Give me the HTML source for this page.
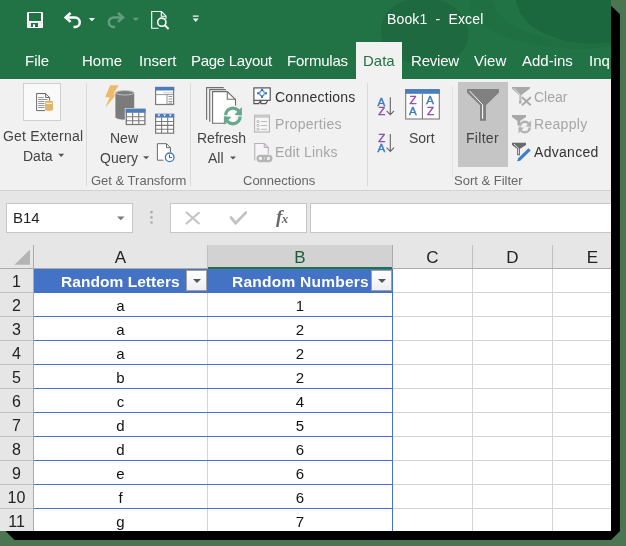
<!DOCTYPE html>
<html><head><meta charset="utf-8">
<style>
*{margin:0;padding:0;box-sizing:border-box}
html,body{width:626px;height:546px;overflow:hidden;background:#4c7552;font-family:"Liberation Sans",sans-serif}
.abs{position:absolute}
#shadow{position:absolute;left:8px;top:6px;width:612px;height:534px;background:#000;border-radius:9px}
#win{position:absolute;left:0;top:0;width:611px;height:531px;background:#fff;overflow:hidden;will-change:transform}
#title{position:absolute;left:0;top:0;width:611px;height:79px;background:#217346;overflow:hidden}
.t{position:absolute;white-space:nowrap;line-height:1}
.tab{color:#fff;font-size:15px;top:53px}
#ribbon{position:absolute;left:0;top:79px;width:611px;height:112px;background:#f1f1f1;border-bottom:1px solid #d2d2d2}
.rt{color:#444;font-size:14px}
.gl{color:#666;font-size:13px}
.sep{position:absolute;width:1px;background:#dadada}
#fbar{position:absolute;left:0;top:191px;width:611px;height:54px;background:#e6e6e6}
#grid{position:absolute;left:0;top:245px;width:611px;height:286px;background:#fff}
.hl{position:absolute;height:1px}
.vl{position:absolute;width:1px}
.rh{position:absolute;left:0;width:33px;text-align:center;font-size:16px;color:#222;line-height:1}
.ch{position:absolute;top:4px;text-align:center;font-size:17px;color:#222;line-height:1}
.cell{position:absolute;text-align:center;font-size:15px;color:#111;line-height:1}
svg{position:absolute;left:0;top:0}
</style></head><body>
<svg width="626" height="546" style="position:absolute;left:0;top:0"><path d="M600 5.8 H611 L620 14.3 V531 L611 540 H14.5 L5.5 531 V520 H600 Z" fill="#000"/></svg>
<div id="win">
  <div id="title">
    <svg width="611" height="78" viewBox="0 0 611 78">
      <g fill="#1a5e39">
        <path d="M381 33 C380 12 398 -2 424 -2 C450 -2 468 14 468 34 C468 52 455 64 426 64 C400 64 382 52 381 33 Z" opacity="0.42"/>
        <path d="M516 0 C519 24 545 39 580 43 C595 44 605 43 611 42 V0 Z" opacity="0.55"/>
        <path d="M470 10 C485 32 515 45 560 48 C588 50 603 48 611 46 V42 C590 44 548 41 522 30 C505 22 495 12 492 0 H470 Z" opacity="0.2"/>
      </g>
    </svg>
    <div class="t" style="left:387px;top:12px;color:#fff;font-size:14px;letter-spacing:0.15px">Book1&nbsp; -&nbsp; Excel</div>
    <div class="t tab" style="left:25px">File</div>
    <div class="t tab" style="left:82px">Home</div>
    <div class="t tab" style="left:139px">Insert</div>
    <div class="t tab" style="left:191px;letter-spacing:-0.3px">Page Layout</div>
    <div class="t tab" style="left:287px;letter-spacing:-0.2px">Formulas</div>
    <div class="abs" style="left:356px;top:42px;width:46px;height:37px;background:#f1f1f1"></div>
    <div class="t tab" style="left:363px;color:#217346">Data</div>
    <div class="t tab" style="left:411px;letter-spacing:-0.2px">Review</div>
    <div class="t tab" style="left:474px">View</div>
    <div class="t tab" style="left:522px">Add-ins</div>
    <div class="t tab" style="left:589px">Inq</div>
  </div>
  <div id="ribbon">
    <div class="sep" style="left:86px;top:4px;height:103px"></div>
    <div class="sep" style="left:190px;top:4px;height:103px"></div>
    <div class="sep" style="left:367px;top:4px;height:103px"></div>
    <div class="sep" style="left:452px;top:7px;height:92px;background:#e4e4e4"></div>
    <div class="abs" style="left:23px;top:4px;width:38px;height:38px;border:1px solid #cfcfcf;background:#fafafa"></div>
    <div class="abs" style="left:458px;top:3px;width:50px;height:85px;background:#c5c5c5"></div>
    <div class="t rt" style="left:3px;top:50px;letter-spacing:0.2px">Get External</div>
    <div class="t rt" style="left:23px;top:70px">Data</div>
    <div class="t rt" style="left:110px;top:52px">New</div>
    <div class="t rt" style="left:100px;top:72px">Query</div>
    <div class="t gl" style="left:91px;top:95px">Get &amp; Transform</div>
    <div class="t rt" style="left:197px;top:52px">Refresh</div>
    <div class="t rt" style="left:208px;top:72px">All</div>
    <div class="t rt" style="left:275px;top:11px;color:#333;letter-spacing:0.25px">Connections</div>
    <div class="t rt" style="left:275px;top:38px;color:#a6a6a6;letter-spacing:0.3px">Properties</div>
    <div class="t rt" style="left:275px;top:66px;color:#a6a6a6;letter-spacing:0.2px">Edit Links</div>
    <div class="t gl" style="left:243px;top:95px">Connections</div>
    <div class="t rt" style="left:409px;top:52px">Sort</div>
    <div class="t rt" style="left:466px;top:52px;letter-spacing:0.3px">Filter</div>
    <div class="t rt" style="left:534px;top:11px;color:#a6a6a6">Clear</div>
    <div class="t rt" style="left:534px;top:38px;color:#a6a6a6;letter-spacing:0.3px">Reapply</div>
    <div class="t rt" style="left:534px;top:66px;color:#333;letter-spacing:0.3px">Advanced</div>
    <div class="t gl" style="left:454px;top:95px">Sort &amp; Filter</div>
  </div>
  <div id="fbar">
    <div class="abs" style="left:6px;top:12px;width:127px;height:30px;border:1px solid #c6c6c6;background:#fff"></div>
    <div class="t" style="left:13px;top:19px;font-size:15px;color:#222">B14</div>
    <div class="abs" style="left:170px;top:12px;width:137px;height:30px;border:1px solid #c6c6c6;background:#fff"></div>
    <div class="abs" style="left:310px;top:12px;width:310px;height:30px;border:1px solid #c6c6c6;background:#fff"></div>
  </div>
  <div id="grid">
    <div class="abs" style="left:0;top:0;width:611px;height:23px;background:#e6e6e6"></div>
    <div class="abs" style="left:208px;top:0;width:184px;height:22px;background:#d2d2d2"></div>
    <div class="abs" style="left:0;top:24px;width:33px;height:262px;background:#e6e6e6"></div>
    <div class="hl" style="left:0;top:23px;width:611px;background:#ababab"></div>
    <div class="hl" style="left:208px;top:22px;width:184px;height:2px;background:#217346"></div>
    <div class="vl" style="left:33px;top:0;height:286px;background:#ababab"></div>
    <div class="vl" style="left:207px;top:0;height:23px;background:#c0c0c0"></div>
    <div class="vl" style="left:392px;top:0;height:23px;background:#ababab"></div>
    <div class="vl" style="left:472px;top:0;height:23px;background:#c0c0c0"></div>
    <div class="vl" style="left:552px;top:0;height:23px;background:#c0c0c0"></div>
    <div class="ch" style="left:34px;width:173px">A</div>
    <div class="ch" style="left:208px;width:184px;color:#1d5c37">B</div>
    <div class="ch" style="left:393px;width:79px">C</div>
    <div class="ch" style="left:473px;width:79px">D</div>
    <div class="ch" style="left:553px;width:79px">E</div>
    <div class="rh" style="top:29px">1</div>
    <div class="hl" style="left:0;top:47px;width:33px;background:#c0c0c0"></div>
    <div class="rh" style="top:53px">2</div>
    <div class="hl" style="left:0;top:71px;width:33px;background:#c0c0c0"></div>
    <div class="hl" style="left:392px;top:71px;width:219px;background:#d4d4d4"></div>
    <div class="rh" style="top:77px">3</div>
    <div class="hl" style="left:0;top:95px;width:33px;background:#c0c0c0"></div>
    <div class="hl" style="left:392px;top:95px;width:219px;background:#d4d4d4"></div>
    <div class="rh" style="top:101px">4</div>
    <div class="hl" style="left:0;top:119px;width:33px;background:#c0c0c0"></div>
    <div class="hl" style="left:392px;top:119px;width:219px;background:#d4d4d4"></div>
    <div class="rh" style="top:125px">5</div>
    <div class="hl" style="left:0;top:143px;width:33px;background:#c0c0c0"></div>
    <div class="hl" style="left:392px;top:143px;width:219px;background:#d4d4d4"></div>
    <div class="rh" style="top:149px">6</div>
    <div class="hl" style="left:0;top:167px;width:33px;background:#c0c0c0"></div>
    <div class="hl" style="left:392px;top:167px;width:219px;background:#d4d4d4"></div>
    <div class="rh" style="top:173px">7</div>
    <div class="hl" style="left:0;top:191px;width:33px;background:#c0c0c0"></div>
    <div class="hl" style="left:392px;top:191px;width:219px;background:#d4d4d4"></div>
    <div class="rh" style="top:197px">8</div>
    <div class="hl" style="left:0;top:215px;width:33px;background:#c0c0c0"></div>
    <div class="hl" style="left:392px;top:215px;width:219px;background:#d4d4d4"></div>
    <div class="rh" style="top:221px">9</div>
    <div class="hl" style="left:0;top:239px;width:33px;background:#c0c0c0"></div>
    <div class="hl" style="left:392px;top:239px;width:219px;background:#d4d4d4"></div>
    <div class="rh" style="top:245px">10</div>
    <div class="hl" style="left:0;top:263px;width:33px;background:#c0c0c0"></div>
    <div class="hl" style="left:392px;top:263px;width:219px;background:#d4d4d4"></div>
    <div class="rh" style="top:269px">11</div>
    <div class="hl" style="left:0;top:287px;width:33px;background:#c0c0c0"></div>
    <div class="hl" style="left:392px;top:287px;width:219px;background:#d4d4d4"></div>
    <div class="vl" style="left:207px;top:47px;height:239px;background:#d4d4d4"></div>
    <div class="vl" style="left:472px;top:24px;height:262px;background:#d4d4d4"></div>
    <div class="vl" style="left:552px;top:24px;height:262px;background:#d4d4d4"></div>
    <div class="hl" style="left:392px;top:47px;width:219px;background:#d4d4d4"></div>
    <div class="abs" style="left:34px;top:24px;width:359px;height:24px;background:#4472c4"></div>
    <div class="hl" style="left:34px;top:71px;width:359px;background:#4472c4"></div>
    <div class="hl" style="left:34px;top:95px;width:359px;background:#4472c4"></div>
    <div class="hl" style="left:34px;top:119px;width:359px;background:#4472c4"></div>
    <div class="hl" style="left:34px;top:143px;width:359px;background:#4472c4"></div>
    <div class="hl" style="left:34px;top:167px;width:359px;background:#4472c4"></div>
    <div class="hl" style="left:34px;top:191px;width:359px;background:#4472c4"></div>
    <div class="hl" style="left:34px;top:215px;width:359px;background:#4472c4"></div>
    <div class="hl" style="left:34px;top:239px;width:359px;background:#4472c4"></div>
    <div class="hl" style="left:34px;top:263px;width:359px;background:#4472c4"></div>
    <div class="hl" style="left:34px;top:287px;width:359px;background:#4472c4"></div>
    <div class="vl" style="left:392px;top:24px;height:262px;background:#4472c4"></div>
    <div class="t" style="left:61px;top:29px;font-size:15.5px;font-weight:bold;color:#fff;letter-spacing:0.05px">Random Letters</div>
    <div class="t" style="left:232px;top:29px;font-size:15.5px;font-weight:bold;color:#fff;letter-spacing:0.25px">Random Numbers</div>
    <div class="abs" style="left:186px;top:25px;width:21px;height:21px;border:1px solid #a0a0a0;background:linear-gradient(#fff,#eceef2)"></div>
    <div class="abs" style="left:193px;top:34px;width:0;height:0;border-left:4px solid transparent;border-right:4px solid transparent;border-top:4px solid #555"></div>
    <div class="abs" style="left:371px;top:25px;width:21px;height:21px;border:1px solid #a0a0a0;background:linear-gradient(#fff,#eceef2)"></div>
    <div class="abs" style="left:378px;top:34px;width:0;height:0;border-left:4px solid transparent;border-right:4px solid transparent;border-top:4px solid #555"></div>
    <div class="cell" style="left:34px;width:173px;top:53px">a</div>
    <div class="cell" style="left:208px;width:184px;top:53px">1</div>
    <div class="cell" style="left:34px;width:173px;top:77px">a</div>
    <div class="cell" style="left:208px;width:184px;top:77px">2</div>
    <div class="cell" style="left:34px;width:173px;top:101px">a</div>
    <div class="cell" style="left:208px;width:184px;top:101px">2</div>
    <div class="cell" style="left:34px;width:173px;top:125px">b</div>
    <div class="cell" style="left:208px;width:184px;top:125px">2</div>
    <div class="cell" style="left:34px;width:173px;top:149px">c</div>
    <div class="cell" style="left:208px;width:184px;top:149px">4</div>
    <div class="cell" style="left:34px;width:173px;top:173px">d</div>
    <div class="cell" style="left:208px;width:184px;top:173px">5</div>
    <div class="cell" style="left:34px;width:173px;top:197px">d</div>
    <div class="cell" style="left:208px;width:184px;top:197px">6</div>
    <div class="cell" style="left:34px;width:173px;top:221px">e</div>
    <div class="cell" style="left:208px;width:184px;top:221px">6</div>
    <div class="cell" style="left:34px;width:173px;top:245px">f</div>
    <div class="cell" style="left:208px;width:184px;top:245px">6</div>
    <div class="cell" style="left:34px;width:173px;top:269px">g</div>
    <div class="cell" style="left:208px;width:184px;top:269px">7</div>
  </div>
<svg id="ov" width="611" height="531" viewBox="0 0 611 531" style="position:absolute;left:0;top:0;pointer-events:none">
<!-- save -->
<rect x="27" y="12" width="16" height="16" rx="1" fill="#fff"/>
<rect x="28" y="22" width="14" height="5" fill="#eeeeee"/>
<rect x="29" y="13" width="12" height="8" fill="#217346"/>
<rect x="31" y="23" width="7" height="4" fill="#217346"/>
<rect x="33" y="24.3" width="2" height="2.7" fill="#fff"/>
<!-- undo -->
<path d="M70.6 13 L65.6 17.4 L70.6 21.9" stroke="#fff" stroke-width="2.5" fill="none"/>
<path d="M65.5 17.4 H75 A4.75 4.75 0 0 1 75 26.9 H73.5" stroke="#fff" stroke-width="2.5" fill="none"/>
<path d="M88.8 18 H95 L91.9 21.2 Z" fill="#fff"/>
<!-- redo -->
<g transform="translate(188.6,0) scale(-1,1)" opacity="0.3">
<path d="M70.6 13 L65.6 17.4 L70.6 21.9" stroke="#fff" stroke-width="2.5" fill="none"/>
<path d="M65.5 17.4 H75 A4.75 4.75 0 0 1 75 26.9 H73.5" stroke="#fff" stroke-width="2.5" fill="none"/>
</g>
<path d="M132.6 17.8 H139 L135.8 21 Z" fill="#fff" opacity="0.3"/>
<!-- print preview -->
<path d="M158.5 28.3 H151.7 V11.5 H161.5 L166 16 V19" stroke="#fff" stroke-width="1.1" fill="none"/>
<path d="M161.3 11.5 V16.2 H166" stroke="#fff" stroke-width="1.1" fill="none"/>
<circle cx="161.8" cy="22.2" r="4.1" stroke="#fff" stroke-width="1.6" fill="#217346"/>
<path d="M164.6 25 L168.6 29" stroke="#fff" stroke-width="1.8"/>
<!-- customize -->
<rect x="192.8" y="15.5" width="5.8" height="1.2" fill="#fff"/>
<path d="M192.8 18.6 H198.6 L195.7 22 Z" fill="#fff"/>

<!-- Get External Data icon -->
<path d="M36.6 93.5 H45.6 L49.6 97.5 V100.5 M45.6 93.5 V97.5 H49.6 M36.6 93.5 V110.6 H45" stroke="#6b6b6b" fill="none" stroke-width="1"/>
<g stroke="#8a8a8a" stroke-width="0.9">
<path d="M38.2 97.6 H43.8 M38.2 99.5 H47.5 M38.2 101.5 H44.5 M38.2 103.5 H44.5 M38.2 105.5 H44.5 M38.2 107.5 H44.5"/>
</g>
<path d="M45 101.6 Q49 99.6 53 101.6 V110 Q49 112 45 110 Z" fill="#e3b46c"/>
<path d="M45.8 103.4 H52.2" stroke="#fff" stroke-width="0.9"/>

<!-- New Query icon -->
<polygon points="110.2,85.2 118.8,85.2 113.6,93.4 117.3,93.4 105.1,107.8 109.8,97.3 105.1,97.3" fill="#ebbb6b"/>
<path d="M115 92.8 A9.85 2.9 0 0 1 134.7 92.8 V117.2 A9.85 2.9 0 0 1 115 117.2 Z" fill="#7b7b7b" stroke="#f1f1f1" stroke-width="0.8"/>
<ellipse cx="124.85" cy="92.8" rx="9" ry="2.2" fill="none" stroke="#cfcfcf" stroke-width="0.8"/>
<rect x="124.8" y="108" width="21.2" height="17.6" fill="#f1f1f1"/>
<rect x="126.3" y="109.4" width="18.6" height="15.1" fill="#fff" stroke="#7a7a7a" stroke-width="1.3"/>
<rect x="125.7" y="108.8" width="19.8" height="4" fill="#4a7ebb"/>
<path d="M132.6 112.8 V124.5 M138.8 112.8 V124.5 M126.3 116.8 H144.9 M126.3 120.7 H144.9" stroke="#7a7a7a" stroke-width="1.1"/>

<!-- small icon 1 -->
<rect x="155.6" y="87.5" width="18" height="17" fill="#fff" stroke="#7a7a7a" stroke-width="1.2"/>
<rect x="155" y="86.9" width="19.2" height="3.6" fill="#4a7ebb"/>
<path d="M163.5 92.8 H172.5" stroke="#8a8a8a" stroke-width="0.9" stroke-dasharray="1 1"/>
<path d="M155.6 94.6 H173.6 M167 94.6 V104.5" stroke="#8a8a8a" stroke-width="0.9"/>
<path d="M168.5 96.5 H172.3 M168.5 99 H172.3 M168.5 101.5 H172.3 M168.5 103.2 H172.3" stroke="#8a8a8a" stroke-width="0.9"/>
<!-- small icon 2 -->
<rect x="155.6" y="114.4" width="18" height="18.8" fill="#fff" stroke="#7a7a7a" stroke-width="1.2"/>
<rect x="155" y="113.8" width="19.2" height="3.8" fill="#4a7ebb"/>
<path d="M157.4 114.6 h3 l-1.5 1.8z M163.1 114.6 h3 l-1.5 1.8z M168.8 114.6 h3 l-1.5 1.8z" fill="#fff"/>
<path d="M161.6 117.6 V133 M167.7 117.6 V133 M155.6 121.5 H173.6 M155.6 125.4 H173.6 M155.6 129.3 H173.6" stroke="#7a7a7a" stroke-width="1.1"/>
<!-- small icon 3 -->
<path d="M163.5 160.2 H157.4 V143.7 H166.5 L170.5 147.7 V152" stroke="#6b6b6b" stroke-width="1" fill="#fff"/>
<path d="M166.5 143.7 V147.7 H170.5" stroke="#6b6b6b" stroke-width="1" fill="none"/>
<circle cx="169.7" cy="157.3" r="4.3" fill="#fff" stroke="#3c78c3" stroke-width="1.3"/>
<path d="M169.5 154.6 V157.6 H172" stroke="#555" stroke-width="1" fill="none"/>

<!-- Refresh All -->
<path d="M206.6 119.8 V87.6 H223.7" stroke="#6f6f6f" stroke-width="1.1" fill="none"/>
<path d="M209.7 121.7 V89.6 H225.9" stroke="#6f6f6f" stroke-width="1.1" fill="none"/>
<mask id="rm"><rect x="0" y="0" width="611" height="531" fill="#fff"/><circle cx="232.9" cy="115.8" r="10.2" fill="#000"/></mask>
<path d="M212.6 91.6 H227.3 L235.5 99.6 V123.2 H212.6 Z" fill="#fff"/>
<g mask="url(#rm)">
<path d="M212.6 91.6 H227.3 L235.5 99.6 V123.2 H212.6 Z" stroke="#6f6f6f" stroke-width="1.1" fill="none"/>
<path d="M227.3 91.6 V99.3 H235.5" stroke="#6f6f6f" stroke-width="1.1" fill="none"/>
</g>
<g fill="#68a88f">
<path d="M224 115.3 A8.9 8.9 0 0 1 241.8 115.3 L238.5 115.3 A5.6 5.6 0 0 0 227.3 115.3 Z"/>
<path d="M241.9 107 L241.9 115.3 L234.3 115 Z"/>
<path d="M241.8 116.5 A8.9 8.9 0 0 1 224 116.5 L227.3 116.5 A5.6 5.6 0 0 0 238.5 116.5 Z"/>
<path d="M223.9 124.8 L223.9 116.5 L231.5 116.8 Z"/>
</g>

<!-- Connections icon -->
<rect x="253.9" y="87.9" width="16.3" height="12.4" fill="#fff" stroke="#555" stroke-width="1.2"/>
<path d="M253.9 100.2 V103.6 H258.7 L260.6 100.6 M260.9 100.6 V103.6 H265.8 L267.7 100.6" stroke="#555" stroke-width="1.1" fill="none"/>
<ellipse cx="262" cy="93.3" rx="2.3" ry="2.7" stroke="#5b8fcf" stroke-width="1.1" fill="none"/>
<g fill="#2f6fbd"><rect x="261" y="88.8" width="2.1" height="2.1"/><rect x="261" y="95.8" width="2.1" height="2.1"/><rect x="257.1" y="92.2" width="2.1" height="2.1"/><rect x="264.9" y="92.2" width="2.1" height="2.1"/></g>
<!-- Properties icon -->
<rect x="254.6" y="115.2" width="14.8" height="16.8" fill="#f7f7f7" stroke="#b3b3b3" stroke-width="1.1"/>
<rect x="254.6" y="115.2" width="14.8" height="2.6" fill="#c9c9c9"/>
<g stroke="#b0b0b0" stroke-width="0.9" fill="none">
<circle cx="258" cy="121.6" r="1.1"/><circle cx="258" cy="125.5" r="1.1"/><circle cx="258" cy="129.3" r="1.1"/>
<path d="M260.8 121.6 H267.2 M260.8 125.5 H267.2 M260.8 129.3 H267.2"/>
</g>
<!-- Edit Links icon -->
<path d="M254.8 160.6 V143.5 H264.3 L268.3 147.5 V153.8" stroke="#b3b3b3" stroke-width="1.1" fill="#f7f4f7"/>
<path d="M264.3 143.5 V147.5 H268.3" stroke="#b3b3b3" stroke-width="1.1" fill="none"/>
<rect x="257.6" y="155.9" width="8.4" height="5.2" rx="2.6" stroke="#b5b5b5" stroke-width="2.3" fill="none"/>
<rect x="262.9" y="155.9" width="8.4" height="5.2" rx="2.6" stroke="#b5b5b5" stroke-width="2.3" fill="none"/>
<!-- Sort AZ ZA -->
<rect x="405.7" y="89.7" width="33.6" height="29.3" fill="#fff" stroke="#7a7a7a" stroke-width="1.1"/>
<g font-family="Liberation Sans" font-size="11.5px" stroke-width="0.45">
<text x="377.6" y="105.7" fill="#3e7cc0" stroke="#3e7cc0">A</text>
<text x="378.3" y="114.9" fill="#8b4bb5" stroke="#8b4bb5">Z</text>
<text x="378.3" y="141.6" fill="#8b4bb5" stroke="#8b4bb5">Z</text>
<text x="377.6" y="151.8" fill="#3e7cc0" stroke="#3e7cc0">A</text>
<text x="409.6" y="104.3" fill="#8b4bb5" stroke="#8b4bb5">Z</text>
<text x="409" y="115.2" fill="#3e7cc0" stroke="#3e7cc0">A</text>
<text x="426.2" y="104.3" fill="#3e7cc0" stroke="#3e7cc0">A</text>
<text x="426.9" y="115.2" fill="#8b4bb5" stroke="#8b4bb5">Z</text>
</g>
<path d="M390.3 97.3 V114.5 M386.6 110.8 L390.3 114.6 L394 110.8" stroke="#666" stroke-width="1.1" fill="none"/>
<path d="M390.3 134 V151.3 M386.6 147.6 L390.3 151.4 L394 147.6" stroke="#666" stroke-width="1.1" fill="none"/>
<rect x="405.2" y="89.2" width="34.6" height="4.6" fill="#4a7ebb"/>
<path d="M422.4 93.8 V119" stroke="#7a7a7a" stroke-width="1.1"/>

<!-- Filter funnel -->
<polygon points="467,89 499,89 499,92.4 486,105.2 486,120.7 480,120.7 480,105.2 467,92.4" fill="#808080"/>
<polyline points="469.6,91 482.6,104.7 482.6,118.9" stroke="#fff" stroke-width="1" fill="none"/>
<!-- Clear -->
<polygon points="512,87 530,87 530,88.6 521.4,95.1 521.4,103.5 519,103.5 519,95.1 512,88.6" fill="#a8a8a8"/>
<polyline points="514,88.2 519.9,94.8 519.9,101" stroke="#f1f1f1" stroke-width="0.8" fill="none"/>
<path d="M522 97.3 L530.8 105.3 M530.8 97.3 L522 105.3" stroke="#a8a8a8" stroke-width="1.9"/>
<!-- Reapply -->
<polygon points="512,115 526,115 526,117 520,121 520,125.3 517.5,125.3 517.5,121 512,117" fill="#a8a8a8"/>
<g fill="#b3b3b3">
<path d="M518.6 126.6 A6.2 6.2 0 0 1 531 126.6 L528.4 126.6 A3.6 3.6 0 0 0 521.2 126.6 Z"/>
<path d="M531.1 120.6 L531.1 126.6 L525.6 126.6 Z"/>
<path d="M531 127.4 A6.2 6.2 0 0 1 518.6 127.4 L521.2 127.4 A3.6 3.6 0 0 0 528.4 127.4 Z"/>
<path d="M518.5 133.4 L518.5 127.4 L524 127.4 Z"/>
</g>
<!-- Advanced -->
<polygon points="512,142.7 526,142.7 526,144.9 520,148.7 520,155.3 517.1,155.3 517.1,148.7 512,144.9" fill="#6a6a6a"/>
<polyline points="514,144 518.6,148.4 518.6,154.3" stroke="#fff" stroke-width="0.8" fill="none"/>
<path d="M518.8 159.8 L529.6 149.3" stroke="#3e7dc5" stroke-width="3.2"/>
<path d="M517 161.6 L518.2 158.6 L520.2 160.5 Z" fill="#3e7dc5"/>

<!-- dropdown arrows -->
<path d="M58.2 153.8 H64.2 L61.2 156.9 Z" fill="#555"/>
<path d="M143.1 156.2 H149.1 L146.1 159.2 Z" fill="#555"/>
<path d="M230 156.4 H236 L233 159.4 Z" fill="#555"/>
<!-- formula bar icons -->
<path d="M151.5 211 v2.2 M151.5 216.2 v2.2 M151.5 221.4 v2.2" stroke="#a5a5a5" stroke-width="2.2"/>
<path d="M117 216.5 H124.5 L120.75 220.2 Z" fill="#777"/>
<path d="M186 212 L199.5 224 M199.5 212.3 L186 224" stroke="#c2c2c2" stroke-width="2"/>
<path d="M231 217.5 L235.6 223.2 L245.8 212.6" stroke="#c2c2c2" stroke-width="2.8" fill="none" stroke-linecap="round"/>
<text x="276" y="222.5" font-family="Liberation Serif" font-style="italic" font-weight="bold" font-size="19px" fill="#6a6a6a">f</text>
<text x="281.8" y="223.3" font-family="Liberation Serif" font-style="italic" font-weight="bold" font-size="13px" fill="#6a6a6a">x</text>

<!-- select all triangle -->
<polygon points="30,249.6 30,264.8 14.4,264.8" fill="#b4b4b4"/>
</svg>
</div>
</body></html>
